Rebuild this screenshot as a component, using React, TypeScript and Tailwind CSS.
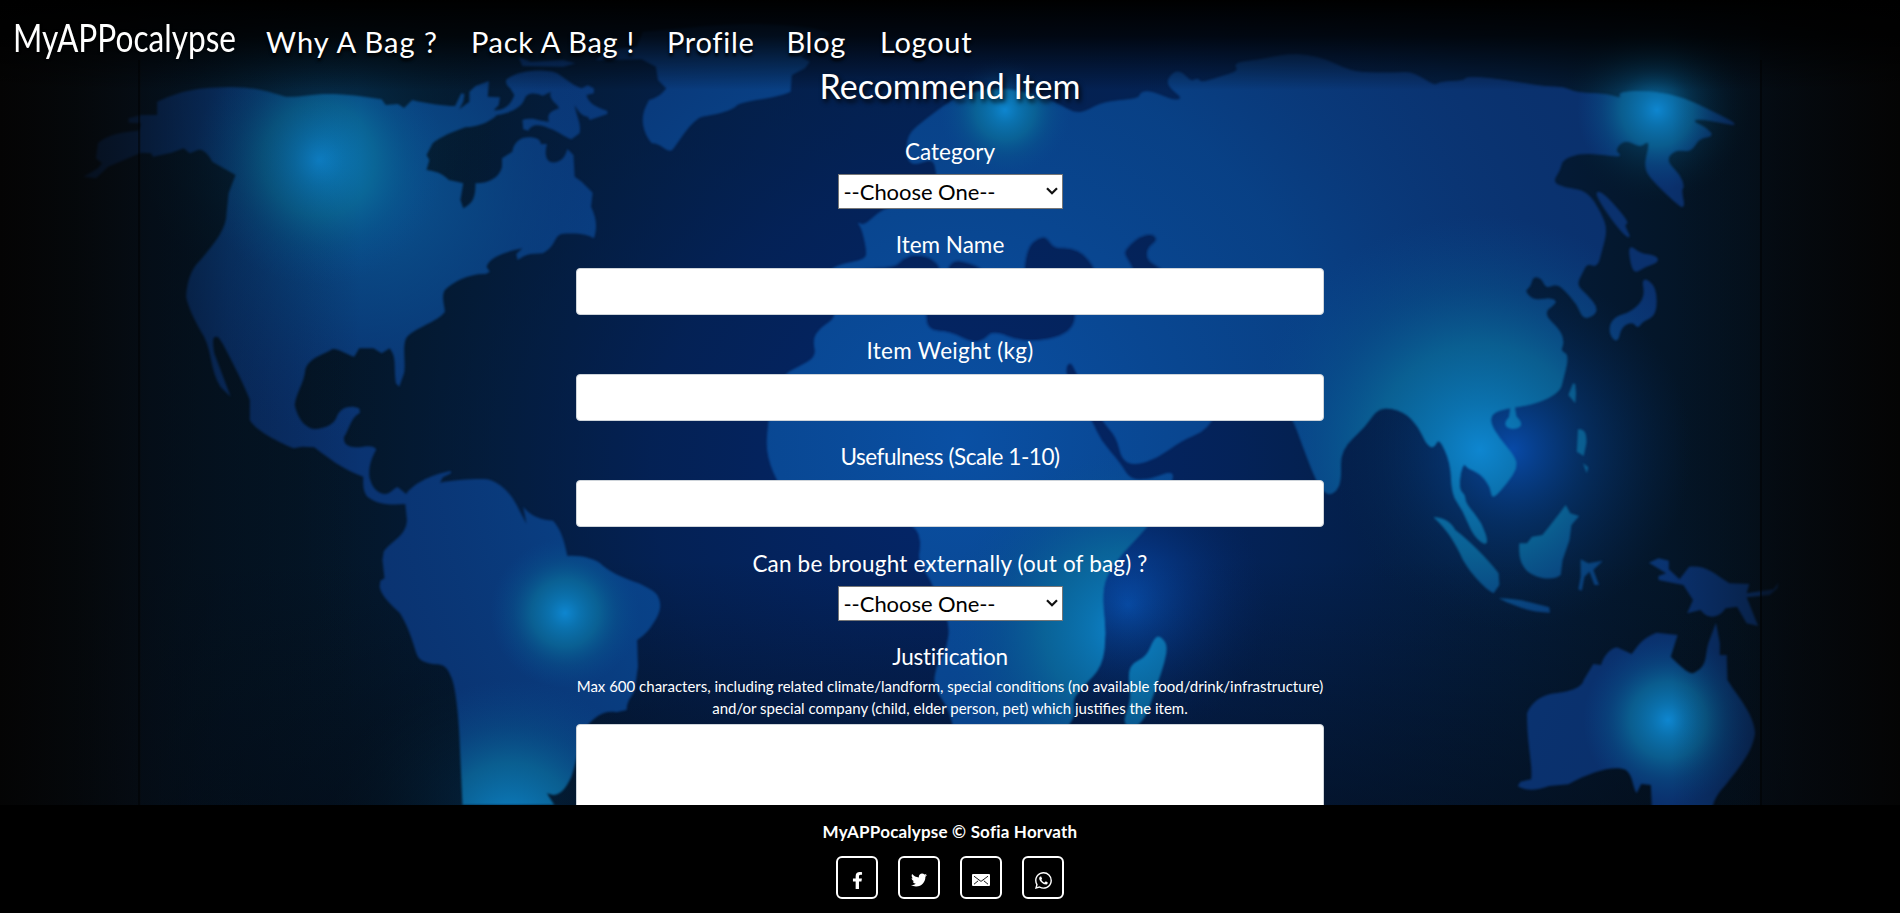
import type { ReactNode } from "react";
import { FaFacebookF, FaTwitter } from "react-icons/fa";
import { BsWhatsapp } from "react-icons/bs";

const NAV_LINKS = [
  { label: "Why A Bag ?", className: "tracking-[1px]" },
  { label: "Pack A Bag !", className: "ml-px tracking-[0.7px]" },
  { label: "Profile", className: "tracking-[0.7px]" },
  { label: "Blog", className: "tracking-[0.7px]" },
  { label: "Logout", className: "ml-0.5 tracking-[0.7px]" },
];

// Outlines of the continents and islands, in three local coordinate frames.
const AMERICAS =
  "M385 305C430 280 470 262 560 261C640 262 660 278 700 290C740 292 760 280 820 282C870 285 900 292 935 298L945 315L975 312L990 324L1010 300C1040 310 1090 318 1115 318L1130 280L1138 282L1135 305L1125 328L1150 305L1150 275L1165 258L1198 243L1195 290L1225 292L1222 315L1210 330C1240 335 1255 305 1260 285L1250 265C1240 255 1235 240 1245 235C1270 210 1340 205 1365 220C1385 235 1400 255 1425 265L1440 256L1455 265L1455 280L1437 285C1440 305 1455 320 1488 333L1488 342L1445 360L1440 350C1425 350 1415 330 1408 315C1412 350 1425 370 1420 400L1400 418C1380 410 1370 395 1345 385C1320 370 1300 375 1295 392L1282 388L1280 360C1310 350 1320 365 1345 365C1340 345 1345 335 1370 325L1365 315C1350 300 1345 285 1350 275L1330 287C1305 275 1290 280 1285 298C1275 330 1240 340 1218 345C1195 370 1170 380 1140 382C1110 395 1080 410 1060 430L1045 465L1052 480L1045 510C1070 515 1080 517 1100 540L1120 545L1135 550L1128 600L1135 625C1160 610 1165 590 1165 550C1200 550 1225 530 1230 500L1230 475L1255 455C1260 425 1275 412 1295 412C1315 412 1325 420 1325 432L1340 432C1335 455 1335 480 1350 487C1375 490 1385 470 1390 447L1405 465L1408 530L1425 545L1452 578L1448 620C1460 650 1465 680 1455 715C1440 705 1420 698 1375 702C1355 712 1365 735 1330 760L1300 762C1285 765 1275 775 1268 780L1265 762L1280 745C1240 755 1200 770 1192 800L1200 815L1190 822C1150 820 1110 845 1090 870C1080 890 1090 920 1090 935C1075 965 1010 985 995 1015C985 1040 995 1090 990 1120L978 1160L970 1150C965 1110 970 1080 962 1060L955 1045L935 1060L915 1045L880 1045L868 1070C850 1065 830 1045 815 1047C790 1065 755 1075 748 1110C745 1150 725 1180 722 1215C730 1260 750 1285 770 1287C800 1285 820 1270 825 1250C835 1220 860 1215 880 1225L882 1238C860 1250 855 1290 843 1310C840 1335 855 1342 880 1342C900 1338 915 1335 922 1348C910 1375 903 1400 905 1430C910 1460 925 1482 945 1482C960 1480 965 1462 975 1462L995 1482C1010 1455 1050 1425 1105 1413L1105 1420L1085 1432L1078 1448C1110 1440 1170 1435 1195 1438C1240 1455 1260 1500 1272 1530L1290 1572L1282 1520C1300 1550 1330 1560 1355 1562C1375 1590 1382 1620 1390 1668C1420 1665 1460 1675 1475 1695C1500 1720 1530 1735 1565 1750C1590 1765 1605 1775 1610 1785C1622 1810 1618 1830 1610 1850C1595 1885 1580 1905 1561 1920L1563 2000L1555 2070C1550 2090 1537 2095 1535 2130L1510 2137C1480 2130 1460 2150 1440 2175C1420 2210 1415 2280 1400 2330C1385 2370 1370 2385 1355 2385L1340 2380L1358 2415L1133 2415L1127 2250C1125 2150 1115 2050 1105 2030C1095 1998 1085 1993 1065 1993C1040 1990 1025 1980 1020 1960C1010 1920 1000 1880 980 1840C960 1815 935 1790 930 1760L932 1742L942 1735L937 1680L940 1655C960 1620 995 1610 997 1560L993 1512C960 1515 925 1515 900 1490C888 1470 890 1450 890 1430C840 1410 800 1370 770 1342L740 1340L720 1345C680 1325 625 1290 612 1260L612 1200C600 1160 575 1100 545 1030L535 1012C520 1005 520 1020 525 1060L565 1190L540 1160C515 1110 520 1060 500 1010C480 970 460 920 456 890C458 850 465 820 480 795C520 740 555 690 555 640L560 580L577 525L520 485C510 460 495 445 485 450L465 460L450 445L420 458L375 470L370 460L345 458L265 500L235 535L205 530L240 505L250 490L235 475L240 430C260 405 300 395 340 392L345 370L315 368L315 355L345 345L385 345Z M1270 170L1300 185L1380 180L1410 190L1380 200L1280 198Z M1575 95L1672 85C1772 70 1892 65 1992 85L2037 100L1992 130L1962 170L1984 185L1972 205L1940 225L1937 275C1892 300 1812 300 1802 320C1772 345 1722 345 1712 355C1682 380 1662 430 1647 450C1632 460 1622 430 1597 430C1577 400 1567 360 1582 320L1590 300C1612 295 1627 275 1632 265L1612 240L1607 200L1572 178L1460 180L1490 150L1560 140Z";

const ISLES =
  "M712 10L718 12L720 40L718 70L700 45Z M725 148C745 145 748 165 747 190L740 228L722 215Z M738 250L752 262L748 280Z M348 412C370 410 395 425 405 450C440 480 485 530 518 580L520 615L505 640C480 625 445 580 425 540C405 490 385 450 348 412Z M518 655C560 655 600 665 650 682L652 698C610 697 570 685 518 655Z M693 375L705 400L728 408L708 435L703 480L685 540L680 585C660 605 610 595 590 570C575 550 570 530 572 490L592 490L605 470L632 465C650 440 670 410 693 375Z M732 538L752 550L790 542L765 570L780 615L768 615L755 575L742 590L735 632L726 628L732 590Z M549 78L560 78L565 110C580 125 585 145 555 147C530 145 532 125 545 112Z M910 548L935 535L962 542L962 568L990 598L1015 560C1060 555 1080 580 1120 610L1172 612L1165 640L1235 628L1248 608L1245 625L1225 645L1165 652L1195 738L1165 730L1140 680L1110 685C1090 720 1060 715 1045 690L1010 700L1025 660L1000 615L970 608L935 600L935 588L955 580Z M1085 728L1095 790L1095 825L1113 825L1115 900C1135 940 1185 1000 1187 1060C1180 1120 1140 1170 1110 1215C1090 1240 1078 1260 1075 1290L918 1290L915 1215L890 1212L878 1240C865 1215 870 1190 850 1170C820 1155 760 1175 700 1213L650 1218C620 1230 590 1235 568 1218L575 1205L603 1198C607 1150 592 1100 592 1000C605 965 630 945 665 940C700 935 735 925 740 900L765 852L785 855C795 820 815 800 830 803L865 822C880 800 890 775 930 758L985 765L967 830C985 850 1010 880 1025 880C1065 860 1055 830 1065 790Z";

const EURASIA_AFRICA: number[][] = [
  [907, 135], [925, 120], [948, 103], [962, 95], [1001, 87], [1042, 97], [1060, 105], [1074, 113], [1085, 112], [1103, 102],
  [1139, 99], [1140, 93], [1148, 91], [1160, 95], [1175, 101], [1183, 98], [1170, 88], [1167, 80], [1175, 71], [1183, 73],
  [1191, 82], [1198, 78], [1201, 83], [1217, 78], [1240, 71], [1233, 63], [1260, 60], [1287, 54], [1307, 55], [1327, 60],
  [1343, 68], [1360, 73], [1398, 73], [1410, 72], [1422, 78], [1435, 86], [1440, 82], [1464, 81], [1466, 77], [1489, 78],
  [1521, 83], [1546, 87], [1564, 87], [1576, 93], [1607, 94], [1622, 99], [1618, 92], [1652, 91], [1684, 98], [1709, 110],
  [1733, 122], [1735, 125], [1729, 124], [1697, 118], [1693, 122], [1705, 127], [1714, 136], [1699, 138], [1691, 152],
  [1676, 149], [1665, 160], [1680, 175], [1684, 187], [1681, 190], [1685, 209], [1676, 203], [1652, 180], [1644, 167],
  [1650, 143], [1646, 142], [1640, 147], [1625, 139], [1614, 150], [1623, 157], [1600, 154], [1578, 153], [1562, 160],
  [1560, 170], [1552, 182], [1564, 188], [1587, 191], [1601, 213], [1607, 230], [1601, 253], [1597, 267], [1587, 263],
  [1582, 273], [1576, 285], [1587, 295], [1597, 307], [1595, 315], [1583, 319], [1578, 305], [1562, 287], [1555, 284],
  [1546, 288], [1542, 278], [1533, 276], [1530, 287], [1524, 291], [1534, 301], [1550, 298], [1558, 302], [1542, 313],
  [1560, 330], [1564, 343], [1560, 351], [1569, 355], [1562, 383], [1560, 390], [1549, 398], [1530, 405], [1507, 408],
  [1492, 413], [1490, 423], [1499, 438], [1515, 457], [1517, 468], [1507, 483], [1492, 500], [1491, 487], [1480, 473],
  [1467, 468], [1464, 463], [1460, 473], [1459, 490], [1465, 495], [1465, 503], [1482, 523], [1489, 547], [1474, 537],
  [1463, 510], [1452, 495], [1451, 463], [1439, 437], [1434, 448], [1427, 445], [1419, 427], [1404, 411], [1379, 406],
  [1365, 427], [1340, 450], [1341, 480], [1336, 492], [1327, 495], [1317, 483], [1300, 438], [1294, 421], [1280, 400],
  [1250, 398], [1220, 405], [1212, 421], [1202, 432], [1182, 440], [1157, 458], [1135, 465], [1122, 460], [1117, 437],
  [1102, 421], [1078, 376], [1070, 359], [1063, 374], [1092, 421], [1100, 440], [1120, 463], [1130, 480], [1150, 480],
  [1172, 471], [1173, 480], [1160, 505], [1147, 528], [1122, 553], [1105, 577], [1102, 600], [1106, 633], [1102, 667],
  [1082, 687], [1072, 700], [1075, 713], [1070, 724], [1040, 760], [990, 770], [960, 755], [953, 724], [948, 707],
  [934, 687], [936, 667], [948, 647], [950, 623], [938, 597], [931, 580], [918, 560], [922, 543], [916, 526], [890, 515],
  [850, 522], [800, 515], [776, 480], [766, 450], [769, 421], [772, 395], [785, 374], [797, 368], [817, 357], [813, 340],
  [820, 328], [838, 317], [830, 290], [825, 275], [837, 265], [866, 260], [867, 250], [862, 228], [857, 222], [864, 226],
  [878, 213], [890, 207], [920, 200], [937, 185], [937, 173], [933, 158], [915, 165], [907, 160],
];

const INLAND_WATER: number[][][] = [
  [[926, 310], [928, 330], [950, 331], [972, 342], [983, 340], [993, 330], [1021, 341], [1050, 339], [1070, 331], [1076, 316], [1070, 300], [930, 295]],
  [[850, 270], [895, 268], [903, 259], [915, 255], [931, 258], [942, 270], [930, 290], [860, 290]],
  [[946, 275], [952, 261], [965, 262], [985, 270], [980, 285]],
  [[1025, 285], [1025, 262], [1030, 245], [1038, 239], [1046, 237], [1054, 249], [1070, 248], [1085, 255], [1098, 275], [1080, 290]],
  [[1152, 234], [1140, 237], [1130, 245], [1124, 253], [1130, 262], [1137, 276], [1168, 276], [1158, 267], [1148, 261], [1146, 253], [1149, 246], [1157, 240]],
];

const EAST_ISLANDS: number[][][] = [
  [[1595, 191], [1605, 195], [1629, 223], [1623, 224], [1631, 239], [1622, 232], [1604, 208]],
  [[1629, 245], [1640, 254], [1656, 256], [1658, 262], [1645, 266], [1635, 273], [1631, 263]],
  [[1642, 277], [1656, 287], [1656, 315], [1642, 321], [1638, 328], [1633, 321], [1621, 326], [1617, 343], [1609, 332], [1613, 318], [1633, 312], [1646, 297]],
  [[1159, 636], [1167, 645], [1164, 662], [1157, 683], [1142, 726], [1122, 726], [1132, 700], [1129, 678], [1131, 665], [1147, 657], [1154, 640]],
];

// Closed curve running through the midpoints of the outline's edges.
function smooth(points: number[][]) {
  const mid = (a: number[], b: number[]) => `${(a[0] + b[0]) / 2} ${(a[1] + b[1]) / 2}`;
  const n = points.length;
  let d = `M${mid(points[n - 1], points[0])}`;
  points.forEach((p, i) => {
    d += `Q${p[0]} ${p[1]} ${mid(p, points[(i + 1) % n])}`;
  });
  return d + "Z";
}

type Glow = { id: string; x: number; y: number; r: number; stops: [number, string, number][] };

const bright: [number, string, number][] = [
  [0, "#0e86d0", 1],
  [0.2, "#0b78b4", 0.9],
  [0.45, "#0a6c9a", 0.75],
  [0.7, "#085a90", 0.38],
  [1, "#084a90", 0],
];

const LAND_GLOWS: Glow[] = [
  { id: "lg0", x: 960, y: 440, r: 760, stops: [[0, "#0a50a4", 1], [0.5, "#08468e", 0.75], [0.8, "#0a3a7c", 0.3], [1, "#0a3270", 0]] },
  { id: "lg1", x: 370, y: 190, r: 250, stops: [[0, "#0a5a94", 0.9], [0.5, "#094884", 0.6], [1, "#0a3878", 0]] },
  { id: "lg2", x: 319, y: 160, r: 125, stops: bright },
  { id: "lg3", x: 1005, y: 110, r: 66, stops: bright },
  { id: "lg4", x: 1657, y: 110, r: 80, stops: bright },
  { id: "lg5", x: 565, y: 613, r: 75, stops: bright },
  { id: "lg6", x: 510, y: 830, r: 150, stops: bright },
  { id: "lg7", x: 1125, y: 630, r: 180, stops: bright },
  { id: "lg8", x: 1480, y: 450, r: 235, stops: bright },
  { id: "lg9", x: 1668, y: 720, r: 85, stops: bright },
];

const SEA_GLOWS: Glow[] = [
  { id: "sg0", x: 940, y: 470, r: 640, stops: [[0, "#04266a", 1], [0.45, "#04225a", 0.8], [1, "#041a38", 0]] },
  { id: "sg1", x: 1128, y: 605, r: 140, stops: [[0, "#0850b0", 1], [0.45, "#063a8a", 0.6], [1, "#042860", 0]] },
  { id: "sg2", x: 1512, y: 450, r: 180, stops: [[0, "#084aa8", 1], [0.4, "#063a7c", 0.6], [1, "#04264e", 0]] },
  { id: "sg3", x: 319, y: 140, r: 180, stops: [[0, "#06406a", 0.8], [1, "#042030", 0]] },
  { id: "sg4", x: 1655, y: 108, r: 95, stops: [[0, "#0a7ab8", 0.9], [0.4, "#06486e", 0.55], [1, "#042030", 0]] },
  { id: "sg5", x: 1002, y: 104, r: 50, stops: [[0, "#0a70b4", 0.8], [1, "#042050", 0]] },
  { id: "sg6", x: 500, y: 830, r: 170, stops: [[0, "#06508a", 0.8], [1, "#042030", 0]] },
];

function GlowDefs({ glows }: { glows: Glow[] }) {
  return (
    <>
      {glows.map((g) => (
        <radialGradient key={g.id} id={g.id} gradientUnits="userSpaceOnUse" cx={g.x} cy={g.y} r={g.r}>
          {g.stops.map(([o, c, a]) => (
            <stop key={o} offset={o} stopColor={c} stopOpacity={a} />
          ))}
        </radialGradient>
      ))}
    </>
  );
}

function GlowLayer({ glows }: { glows: Glow[] }) {
  return (
    <>
      {glows.map((g) => (
        <circle key={g.id} cx={g.x} cy={g.y} r={g.r} fill={`url(#${g.id})`} />
      ))}
    </>
  );
}

function WorldMap() {
  return (
    <svg className="absolute inset-0 h-full w-full" viewBox="0 0 1900 913" aria-hidden="true">
      <defs>
        <linearGradient id="sea">
          <stop offset="0" stopColor="#050607" />
          <stop offset="0.08" stopColor="#04101c" />
          <stop offset="0.25" stopColor="#041a30" />
          <stop offset="0.45" stopColor="#042250" />
          <stop offset="0.62" stopColor="#04255a" />
          <stop offset="0.8" stopColor="#041c3a" />
          <stop offset="0.92" stopColor="#04121f" />
          <stop offset="1" stopColor="#050607" />
        </linearGradient>
        <linearGradient id="edges">
          <stop offset="0" stopColor="#040404" stopOpacity="0.98" />
          <stop offset="0.04" stopColor="#050709" stopOpacity="0.8" />
          <stop offset="0.074" stopColor="#060b11" stopOpacity="0.7" />
          <stop offset="0.0742" stopColor="#050c14" stopOpacity="0.62" />
          <stop offset="0.12" stopColor="#04101c" stopOpacity="0.3" />
          <stop offset="0.19" stopColor="#04101c" stopOpacity="0" />
          <stop offset="0.88" stopColor="#04101c" stopOpacity="0" />
          <stop offset="0.926" stopColor="#050c14" stopOpacity="0.4" />
          <stop offset="0.9262" stopColor="#05090e" stopOpacity="0.6" />
          <stop offset="1" stopColor="#040404" stopOpacity="0.98" />
        </linearGradient>
        <linearGradient id="top" x2="0" y2="1">
          <stop offset="0" stopColor="#000" stopOpacity="1" />
          <stop offset="0.4" stopColor="#000" stopOpacity="0.78" />
          <stop offset="1" stopColor="#000" stopOpacity="0" />
        </linearGradient>
        <linearGradient id="bottom" x2="0" y2="1">
          <stop offset="0" stopColor="#030a14" stopOpacity="0" />
          <stop offset="1" stopColor="#030a14" stopOpacity="0.55" />
        </linearGradient>
        <GlowDefs glows={SEA_GLOWS} />
        <GlowDefs glows={LAND_GLOWS} />
        <filter id="soft" x="0" y="0" width="1900" height="913" filterUnits="userSpaceOnUse">
          <feGaussianBlur stdDeviation="0.8" />
        </filter>
        <mask id="land" maskUnits="userSpaceOnUse" x="0" y="0" width="1900" height="913">
          <g fill="#fff" filter="url(#soft)">
            <path d={AMERICAS} transform="scale(.40816 .33333)" />
            <path d={ISLES} transform="translate(1300 380) scale(.3834 .33333)" />
            <path d={smooth(EURASIA_AFRICA)} stroke="#fff" strokeWidth="1" />
            {EAST_ISLANDS.map((p, i) => (
              <path key={i} d={smooth(p)} stroke="#fff" strokeWidth="1.5" />
            ))}
            {INLAND_WATER.map((p, i) => (
              <path key={i} d={smooth(p)} fill="#000" stroke="#000" strokeWidth="2" />
            ))}
          </g>
        </mask>
      </defs>
      <rect width="1900" height="913" fill="url(#sea)" />
      <GlowLayer glows={SEA_GLOWS} />
      <rect y="560" width="1900" height="260" fill="url(#bottom)" />
      <g mask="url(#land)">
        <rect width="1900" height="913" fill="#0a306c" />
        <GlowLayer glows={LAND_GLOWS} />
      </g>
      <rect width="1900" height="913" fill="url(#edges)" />
      <rect x="138" y="60" width="2" height="760" fill="#000" opacity="0.45" />
      <rect x="1760" y="60" width="2" height="760" fill="#000" opacity="0.45" />
      <rect width="1900" height="90" fill="url(#top)" />
    </svg>
  );
}

function Label({ children, className }: { children: ReactNode; className: string }) {
  return <label className={`block h-8 text-center text-[22.5px] leading-[35px] whitespace-nowrap ${className}`}>{children}</label>;
}

function Choice() {
  return (
    <div className="relative mx-auto h-[35px] w-[225px]">
      <select className="h-full w-full appearance-none border border-[#767676] bg-white pl-[5px] text-[22px] leading-8 tracking-[-0.05px] text-black outline-none">
        <option>--Choose One--</option>
      </select>
      <svg className="absolute top-[13px] right-[5px] h-2 w-3" viewBox="0 0 12 8" fill="none" stroke="#111" strokeWidth="2.2">
        <path d="M1 1.2 6 6.2 11 1.2" />
      </svg>
    </div>
  );
}

function TextInput() {
  return <input className="block h-[47px] w-full rounded border border-[#ced4da] bg-white px-3 text-black outline-none" />;
}

function SocialButton({ children }: { children: ReactNode }) {
  return (
    <a className="flex h-[43px] w-[42px] items-center justify-center rounded-[6px] border-2 border-white pt-[5px] text-white">
      {children}
    </a>
  );
}

export default function App() {
  return (
    <div className="relative flex h-[913px] w-full flex-col overflow-hidden bg-black font-['Lato',sans-serif] text-white">
      <WorldMap />
      <header className="relative flex h-[63px] shrink-0 items-start pt-5">
        <a className="ml-[13px] w-[223px] shrink-0 text-[39.5px] leading-[34px] whitespace-nowrap [text-shadow:0_0_3px_#000]">
          <span className="inline-block origin-left scale-x-[0.8]">MyAPPocalypse</span>
        </a>
        <nav className="ml-[30px] flex gap-8 text-[29px] leading-[43px] whitespace-nowrap [text-shadow:0_3px_3px_#000]">
          {NAV_LINKS.map((link) => (
            <a key={link.label} className={link.className}>
              {link.label}
            </a>
          ))}
        </nav>
      </header>

      <main className="relative min-h-0 flex-1 overflow-hidden">
        <form className="mx-auto w-[748px]">
          <h1 className="h-11 text-center text-[34px] leading-[46px] [text-shadow:2px_3px_5px_#000]">Recommend Item</h1>

          <div className="mt-[27px]">
            <Label className="tracking-normal">Category</Label>
            <div className="mt-2">
              <Choice />
            </div>
          </div>
          <div className="mt-[18px]">
            <Label className="tracking-normal">Item Name</Label>
            <div className="mt-[9px]">
              <TextInput />
            </div>
          </div>
          <div className="mt-[18px]">
            <Label className="tracking-[0.3px]">Item Weight (kg)</Label>
            <div className="mt-[9px]">
              <TextInput />
            </div>
          </div>
          <div className="mt-[18px]">
            <Label className="tracking-[-0.45px]">Usefulness (Scale 1-10)</Label>
            <div className="mt-[9px]">
              <TextInput />
            </div>
          </div>
          <div className="mt-[19px]">
            <Label className="tracking-[0.18px]">Can be brought externally (out of bag) ?</Label>
            <div className="mt-2">
              <Choice />
            </div>
          </div>
          <div className="mt-[18px]">
            <Label className="tracking-[-0.25px]">Justification</Label>
            <p className="-mx-2 mt-1 text-center text-[15px] leading-[22px]">
              Max 600 characters, including related climate/landform, special conditions (no available food/drink/infrastructure)
              <br />
              and/or special company (child, elder person, pet) which justifies the item.
            </p>
            <textarea className="mt-[5px] block h-[140px] w-full resize-none rounded border border-[#ced4da] bg-white px-3 text-black outline-none" />
          </div>
        </form>
      </main>

      <footer className="relative flex h-[108px] shrink-0 flex-col items-center bg-black pt-[14px]">
        <p className="text-[17px] leading-[25px] font-bold tracking-[0.2px] whitespace-nowrap">MyAPPocalypse © Sofia Horvath</p>
        <div className="mt-3 flex gap-5">
          <SocialButton>
            <FaFacebookF size={17} />
          </SocialButton>
          <SocialButton>
            <FaTwitter size={16} />
          </SocialButton>
          <SocialButton>
            <svg className="h-3 w-[18px]" viewBox="0 0 18 12">
              <rect width="18" height="12" rx="1" fill="#fff" />
              <path d="M2 2.2 9 7.4 16 2.2M2 10.2 6.2 6.8M16 10.2 11.8 6.8" fill="none" stroke="#000" strokeWidth="0.9" />
            </svg>
          </SocialButton>
          <SocialButton>
            <BsWhatsapp size={17} />
          </SocialButton>
        </div>
      </footer>
    </div>
  );
}
